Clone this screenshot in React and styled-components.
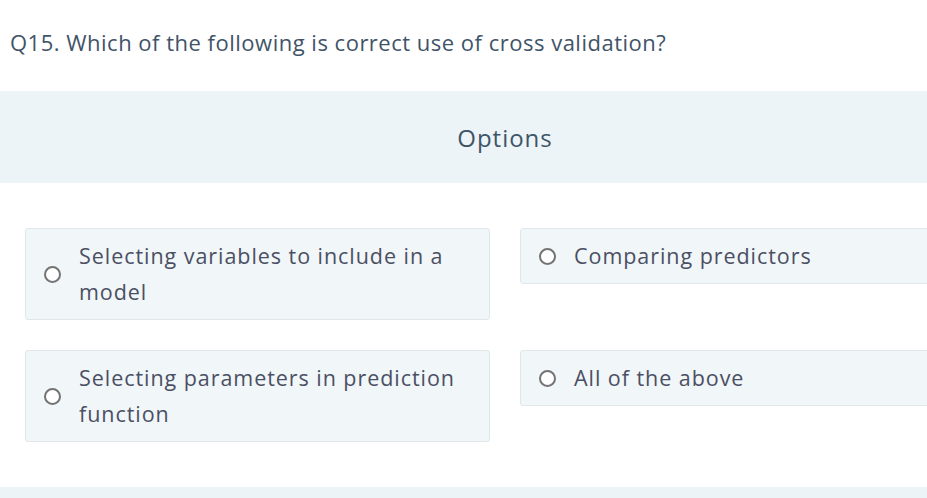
import React from 'react';
import styled, { createGlobalStyle } from 'styled-components';

const GlobalStyle = createGlobalStyle`
   html, body {
      margin: 0;
      padding: 0;
      background: #ffffff;
      overflow: hidden;
   }
   body {
      font-family: 'Open Sans', 'Liberation Sans', sans-serif;
   }
`;

const Page = styled.div`
   width: 1010px;
   padding-top: 25px;
`;

const Question = styled.h2`
   margin: 0 0 0 10px;
   font-size: 22px;
   font-weight: 400;
   line-height: 34px;
   letter-spacing: 0.5px;
   color: #3f5468;
`;

const Band = styled.div`
   margin-top: 32px;
   height: 92px;
   background: #edf4f7;
   display: flex;
   align-items: center;
   justify-content: center;
`;

const BandTitle = styled.h3`
   margin: 0;
   font-size: 24px;
   font-weight: 400;
   letter-spacing: 1px;
   color: #3f5468;
`;

const Grid = styled.div`
   display: grid;
   grid-template-columns: 465px 465px;
   column-gap: 30px;
   row-gap: 30px;
   padding: 45px 0 0 25px;
   align-items: start;
`;

const Card = styled.label`
   display: flex;
   align-items: center;
   box-sizing: border-box;
   min-height: 56px;
   padding: 9px 18px;
   background: #f1f6f8;
   border: 1px solid #e0e7ea;
   border-radius: 3px;
   cursor: pointer;
`;

const Radio = styled.span`
   flex: none;
   width: 17px;
   height: 17px;
   box-sizing: border-box;
   border: 2px solid #737373;
   border-radius: 50%;
   background: #ffffff;
`;

const OptionText = styled.span`
   margin-left: 18px;
   max-width: ${props => props.$wrap ? '390px' : 'none'};
   font-size: 21.5px;
   line-height: 36px;
   letter-spacing: 0.95px;
   color: #4b4f64;
`;

const BottomBand = styled.div`
   margin-top: 45px;
   height: 30px;
   background: #edf4f7;
`;

const options = [
   { text: 'Selecting variables to include in a model', wrap: true },
   { text: 'Comparing predictors' },
   { text: 'Selecting parameters in prediction function', wrap: true },
   { text: 'All of the above' },
];

export default function App() {
   return (
      <>
         <GlobalStyle />
         <Page>
            <Question>Q15. Which of the following is correct use of cross validation?</Question>
            <Band>
               <BandTitle>Options</BandTitle>
            </Band>
            <Grid>
               {options.map(o => (
                  <Card key={o.text}>
                     <Radio />
                     <OptionText $wrap={o.wrap}>{o.text}</OptionText>
                  </Card>
               ))}
            </Grid>
            <BottomBand />
         </Page>
      </>
   );
}
